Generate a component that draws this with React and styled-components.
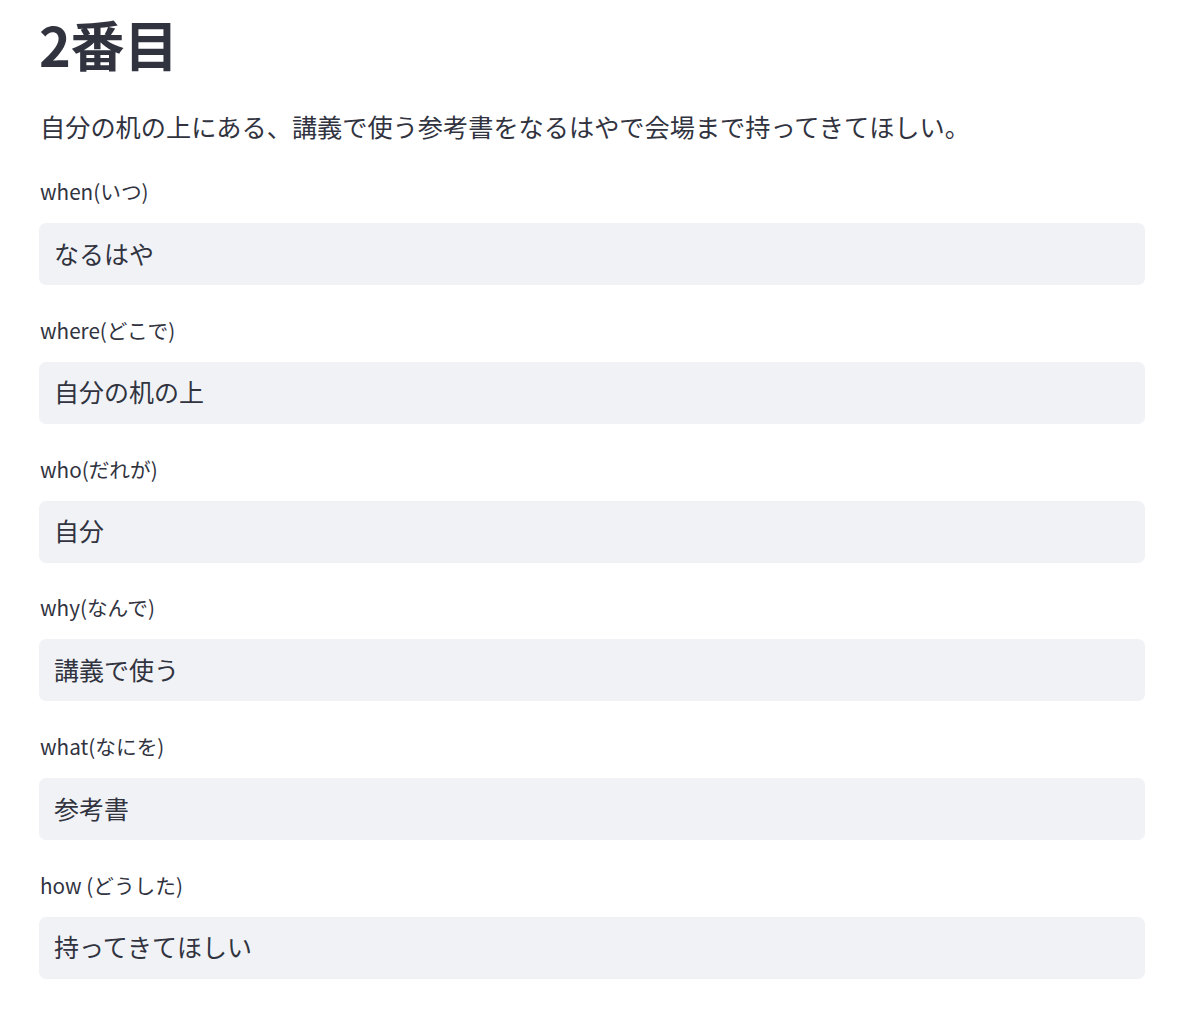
import React from 'react';
import styled, { createGlobalStyle } from 'styled-components';

const GlobalStyle = createGlobalStyle`
  body {
    margin: 0;
    background: #ffffff;
    font-family: "Noto Sans CJK JP", "Noto Sans", sans-serif;
    color: #31333f;
  }
`

const Page = styled.main`
  display: flex;
  flex-direction: column;
  width: 1106px;
  padding: 8px 0 0 39px;
`

const Title = styled.h1`
  margin: 0;
  font-size: 54px;
  font-weight: 700;
  line-height: 72px;
  letter-spacing: -0.3px;
`

const Lead = styled.p`
  margin: 27px 0 0 1px;
  font-size: 25.2px;
  line-height: 38px;
`

const Field = styled.div`
  display: flex;
  flex-direction: column;
  margin-top: ${(p) => (p.first ? '32px' : '30.8px')};
`

const Label = styled.label`
  margin-left: 1px;
  font-size: 20.7px;
  line-height: 28px;
`

const Box = styled.div`
  display: flex;
  align-items: center;
  box-sizing: border-box;
  height: 62px;
  margin-top: 18px;
  padding: 0 15px 3px;
  background: #f0f2f6;
  border-radius: 7px;
  font-size: 25px;
`

const fields = [
  { label: 'when(いつ)', value: 'なるはや' },
  { label: 'where(どこで)', value: '自分の机の上' },
  { label: 'who(だれが)', value: '自分' },
  { label: 'why(なんで)', value: '講義で使う' },
  { label: 'what(なにを)', value: '参考書' },
  { label: 'how (どうした)', value: '持ってきてほしい' },
];

export default function App() {
  return (
    <>
      <GlobalStyle />
      <Page>
        <Title>2番目</Title>
        <Lead>自分の机の上にある、講義で使う参考書をなるはやで会場まで持ってきてほしい。</Lead>
        {fields.map((f, i) => (
          <Field key={f.label} first={i === 0}>
            <Label>{f.label}</Label>
            <Box>{f.value}</Box>
          </Field>
        ))}
      </Page>
    </>
  );
}
